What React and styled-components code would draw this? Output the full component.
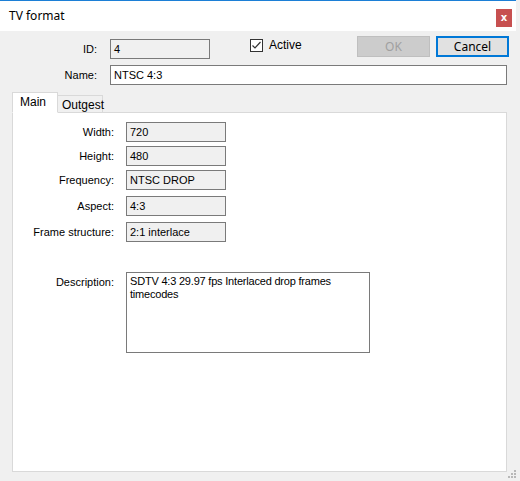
import React from "react";
import styled, { createGlobalStyle } from "styled-components";

const GlobalStyle = createGlobalStyle`
  html, body {
    margin: 0;
    padding: 0;
    background: #f0f0f0;
  }
  * { box-sizing: border-box; }
`;

const Window = styled.div`
  width: 520px;
  height: 481px;
  background: #f0f0f0;
  display: flex;
  flex-direction: column;
  font-family: "Liberation Sans", Arial, sans-serif;
  font-size: 11px;
  color: #000;
  position: relative;
  overflow: hidden;
`;

const TitleBar = styled.div`
  height: 31px;
  flex-shrink: 0;
  width: 516px;
  background: #fff;
  border-top: 1px solid #1c7fd6;
  display: flex;
  align-items: center;
  padding-left: 9px;
  padding-right: 4px;
`;

const Title = styled.div`
  flex: 1;
  font-family: "Noto Sans", "Open Sans", sans-serif;
  font-size: 12px;
  margin-top: -2px;
`;

const CloseButton = styled.div`
  width: 16px;
  height: 18px;
  background: #c75050;
  color: #fff;
  font-family: "DejaVu Sans", sans-serif;
  font-weight: bold;
  font-size: 10px;
  display: flex;
  align-items: center;
  justify-content: center;
  margin-top: 3px;
`;

const Body = styled.div`
  flex: 1;
  display: flex;
  flex-direction: column;
  padding: 5px 0 9px 0;
  min-height: 0;
`;

const TopRow = styled.div`
  display: flex;
  align-items: flex-start;
  height: 22px;
  flex-shrink: 0;
`;

const HeadLabel = styled.div`
  width: 97px;
  text-align: right;
  margin-right: 13px;
  line-height: 20px;
  margin-top: ${(p) => p.$mt || 0}px;
`;

const TextBox = styled.div`
  width: ${(p) => p.$w}px;
  height: ${(p) => p.$h || 20}px;
  flex-shrink: 0;
  border: 1px solid #7a7a7a;
  background: ${(p) => (p.$readOnly ? "#f0f0f0" : "#fff")};
  padding: ${(p) => (p.$multi ? "2px 3px" : "0 3px")};
  line-height: ${(p) => (p.$multi ? "13px" : "18px")};
  letter-spacing: ${(p) => (p.$multi ? "-0.2px" : "0")};
  margin-top: ${(p) => p.$mt || 0}px;
  white-space: ${(p) => (p.$multi ? "normal" : "nowrap")};
`;

const CheckWrap = styled.label`
  display: flex;
  align-items: center;
  gap: 6px;
  margin-left: 40px;
  margin-top: 2px;
  height: 14px;
  font-size: 12px;
`;

const Box = styled.span`
  width: 13px;
  height: 13px;
  border: 1px solid #333;
  background: #fff;
  display: flex;
  align-items: center;
  justify-content: center;
`;

const Buttons = styled.div`
  display: flex;
  gap: 6px;
  margin-left: auto;
  margin-right: 11px;
`;

const Button = styled.div`
  width: 73px;
  height: 21px;
  display: flex;
  align-items: center;
  justify-content: center;
  font-family: "Noto Sans", "Open Sans", sans-serif;
  font-size: 12px;
  background: ${(p) => (p.$disabled ? "#cccccc" : "#e1e1e1")};
  color: ${(p) => (p.$disabled ? "#a0a0a0" : "#000")};
  border: ${(p) => (p.$primary ? "2px solid #0078d7" : "1px solid #bfbfbf")};
`;

const NameRow = styled.div`
  display: flex;
  align-items: center;
  margin-top: 7px;
  flex-shrink: 0;
`;

const TabStrip = styled.div`
  display: flex;
  align-items: flex-end;
  margin: 6px 0 0 12px;
  height: 21px;
  flex-shrink: 0;
  position: relative;
  z-index: 1;
`;

const Tab = styled.div`
  width: ${(p) => p.$w}px;
  height: ${(p) => (p.$active ? 21 : 18)}px;
  background: ${(p) => (p.$active ? "#fff" : "#f0f0f0")};
  border: 1px solid #d9d9d9;
  border-bottom: ${(p) => (p.$active ? "1px solid #fff" : "1px solid #d9d9d9")};
  border-left: ${(p) => (p.$active ? "1px solid #d9d9d9" : "none")};
  padding: ${(p) => (p.$active ? "2px 0 0 7px" : "2px 0 0 4px")};
  font-size: 12px;
  margin-bottom: -1px;
`;

const Panel = styled.div`
  flex: 1;
  width: 495px;
  margin-left: 12px;
  background: #fff;
  border: 1px solid #d9d9d9;
  padding-top: 9px;
  display: flex;
  flex-direction: column;
`;

const FieldRow = styled.div`
  display: flex;
  align-items: ${(p) => (p.$top ? "flex-start" : "center")};
  margin-top: ${(p) => p.$mt || 0}px;
`;

const FieldLabel = styled.div`
  width: 101px;
  text-align: right;
  margin-right: 12px;
  padding-top: ${(p) => (p.$top ? 4 : 0)}px;
`;

const Grip = styled.svg`
  position: absolute;
  right: 3px;
  bottom: 2px;
`;

function Field({ label, value, mt }) {
  return (
    <FieldRow $mt={mt}>
      <FieldLabel>{label}</FieldLabel>
      <TextBox $w={100} $readOnly>{value}</TextBox>
    </FieldRow>
  );
}

export default function App() {
  return (
    <>
      <GlobalStyle />
      <Window>
        <TitleBar>
          <Title>TV format</Title>
          <CloseButton>x</CloseButton>
        </TitleBar>
        <Body>
          <TopRow>
            <HeadLabel $mt={3}>ID:</HeadLabel>
            <TextBox $w={100} $readOnly $mt={3}>4</TextBox>
            <CheckWrap>
              <Box>
                <svg width="11" height="11" viewBox="0 0 11 11">
                  <path d="M1.5 5.5 L4 8 L9.5 2" stroke="#333" strokeWidth="1.2" fill="none" />
                </svg>
              </Box>
              Active
            </CheckWrap>
            <Buttons>
              <Button $disabled>OK</Button>
              <Button $primary>Cancel</Button>
            </Buttons>
          </TopRow>
          <NameRow>
            <HeadLabel>Name:</HeadLabel>
            <TextBox $w={397}>NTSC 4:3</TextBox>
          </NameRow>
          <TabStrip>
            <Tab $active $w={46}>Main</Tab>
            <Tab $w={45}>Outgest</Tab>
          </TabStrip>
          <Panel>
            <Field label="Width:" value="720" />
            <Field label="Height:" value="480" mt={4} />
            <Field label="Frequency:" value="NTSC DROP" mt={4} />
            <Field label="Aspect:" value="4:3" mt={6} />
            <Field label="Frame structure:" value="2:1 interlace" mt={6} />
            <FieldRow $top $mt={30}>
              <FieldLabel $top>Description:</FieldLabel>
              <TextBox $w={244} $h={81} $multi>
                SDTV 4:3 29.97 fps Interlaced drop frames timecodes
              </TextBox>
            </FieldRow>
          </Panel>
        </Body>
        <Grip width="9" height="9" viewBox="0 0 9 9">
          {[
            [6, 0], [6, 3], [3, 3], [6, 6], [3, 6], [0, 6],
          ].map(([x, y], i) => (
            <rect key={i} x={x} y={y} width="2" height="2" fill="#b8b8b8" />
          ))}
        </Grip>
      </Window>
    </>
  );
}
